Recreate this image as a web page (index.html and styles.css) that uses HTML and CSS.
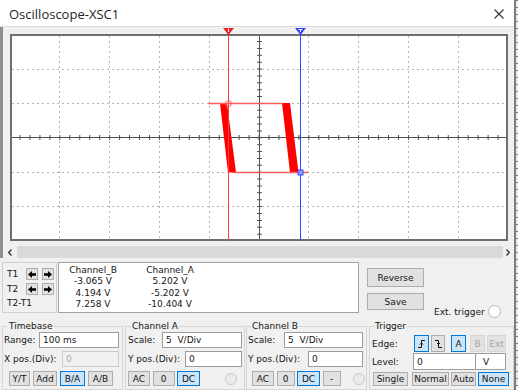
FILE: index.html
```html
<!DOCTYPE html>
<html lang="en">
<head>
    <meta charset="UTF-8">
    <meta name="viewport" content="width=device-width, initial-scale=1.0">
    <title>Oscilloscope-XSC1</title>
    <link rel="stylesheet" href="styles.css">
</head>
<body>
    <div class="window">
        <div class="titlebar">
            <span class="title">Oscilloscope-XSC1</span>
            <svg class="close" width="10" height="10" viewBox="0 0 10 10">
                <path d="M0.5 0.5 L9.5 9.5 M9.5 0.5 L0.5 9.5" stroke="#333" stroke-width="1.1" fill="none"/>
            </svg>
        </div>

        <div class="screen">
            <!-- scope canvas, drawn in page coordinates -->
            <svg class="scope" width="511" height="214" viewBox="3 27 511 214">
                <rect x="11" y="35" width="496" height="205" fill="#fff" stroke="#6e6e6e" stroke-width="2"/>
                <g stroke="#b5b5b5" stroke-width="1" stroke-dasharray="2 3" fill="none">
                    <path d="M59.5 36V239 M109.5 36V239 M159.5 36V239 M209.5 36V239 M308.5 36V239 M358.5 36V239 M408.5 36V239 M458.5 36V239"/>
                    <path d="M12 69.5H506 M12 103.5H506 M12 172.5H506 M12 206.5H506"/>
                </g>
                <g stroke="#505050" fill="none">
                    <path d="M12 137.5H506 M259.5 36V239"/>
                    <line x1="19.5" y1="137.5" x2="500" y2="137.5" stroke-width="5" stroke-dasharray="1 8.96"/>
                    <line x1="259.5" y1="41" x2="259.5" y2="236" stroke-width="5" stroke-dasharray="1 5.88"/>
                </g>
                <g fill="#ff0000">
                    <polygon points="220,103 227,103 236,172.5 228,172.5"/>
                    <polygon points="282,103 290,103 298.5,172.5 290,172.5"/>
                </g>
                <path d="M208 103.5H283 M234 172.5H308" stroke="#ff5b5b" stroke-width="1.4" fill="none"/>
                <line x1="228.5" y1="34" x2="228.5" y2="241" stroke="#ff3b3b"/>
                <line x1="300.5" y1="34" x2="300.5" y2="241" stroke="#3346ff"/>
                <polygon points="223,28 234,28 228.5,35" fill="#e82222"/>
                <line x1="228.5" y1="28.5" x2="228.5" y2="32" stroke="#fff"/>
                <polygon points="295,28 306,28 300.5,35" fill="#2f44f0"/>
                <path d="M298.5 29.5H302.5 M300.5 29.5V32" stroke="#fff" fill="none"/>
                <circle cx="228.5" cy="103.5" r="3" fill="none" stroke="#ff6060"/>
                <rect x="298" y="170" width="5" height="5" fill="#8fa0ff" stroke="#3346ff"/>
            </svg>
            <div class="hscroll">
                <span class="sb-btn sb-left">
                    <svg width="4" height="7" viewBox="0 0 4 7"><path d="M3.5 0.5 L0.7 3.5 L3.5 6.5" stroke="#333" stroke-width="1.3" fill="none"/></svg>
                </span>
                <span class="sb-track"></span>
                <span class="sb-btn sb-right">
                    <svg width="4" height="7" viewBox="0 0 4 7"><path d="M0.5 0.5 L3.3 3.5 L0.5 6.5" stroke="#333" stroke-width="1.3" fill="none"/></svg>
                </span>
            </div>
        </div>

        <div class="readout">
            <div class="tbox">
                <div class="trow">
                    <span class="tl">T1</span>
                    <span class="arrow"><svg width="8" height="7" viewBox="0 0 8 7"><polygon points="0,3.5 4,0 4,2.3 8,2.3 8,4.7 4,4.7 4,7" fill="#000"/></svg></span>
                    <span class="arrow"><svg width="8" height="7" viewBox="0 0 8 7"><polygon points="8,3.5 4,0 4,2.3 0,2.3 0,4.7 4,4.7 4,7" fill="#000"/></svg></span>
                </div>
                <div class="trow">
                    <span class="tl">T2</span>
                    <span class="arrow"><svg width="8" height="7" viewBox="0 0 8 7"><polygon points="0,3.5 4,0 4,2.3 8,2.3 8,4.7 4,4.7 4,7" fill="#000"/></svg></span>
                    <span class="arrow"><svg width="8" height="7" viewBox="0 0 8 7"><polygon points="8,3.5 4,0 4,2.3 0,2.3 0,4.7 4,4.7 4,7" fill="#000"/></svg></span>
                </div>
                <div class="tdiff">T2-T1</div>
            </div>
            <div class="data">
                <span>Channel_B</span><span>Channel_A</span>
                <span>-3.065 V</span><span>5.202 V</span>
                <span>4.194 V</span><span>-5.202 V</span>
                <span>7.258 V</span><span>-10.404 V</span>
            </div>
            <div class="side">
                <div class="side-btns">
                    <span class="btn reverse">Reverse</span>
                    <span class="btn save">Save</span>
                </div>
                <div class="ext">Ext. trigger <span class="radio radio-white"></span></div>
            </div>
        </div>

        <div class="groups">
            <fieldset class="grp timebase">
                <legend>Timebase</legend>
                <div class="row"><span>Range:</span><span class="field f-long">100 ms</span></div>
                <div class="row"><span>X pos.(Div):</span><span class="field f-short off">0</span></div>
                <div class="row btns">
                    <span class="btn w21">Y/T</span>
                    <span class="btn w24">Add</span>
                    <span class="btn w25 on">B/A</span>
                    <span class="btn w25">A/B</span>
                </div>
            </fieldset>

            <fieldset class="grp chan-a">
                <legend>Channel A</legend>
                <div class="row"><span>Scale:</span><span class="field f-long">5&nbsp;&nbsp;V/Div</span></div>
                <div class="row"><span>Y pos.(Div):</span><span class="field f-short">0</span></div>
                <div class="row btns">
                    <span class="btn w22">AC</span>
                    <span class="btn w22">0</span>
                    <span class="btn w23 on">DC</span>
                    <span class="radio"></span>
                </div>
            </fieldset>

            <fieldset class="grp chan-b">
                <legend>Channel B</legend>
                <div class="row"><span>Scale:</span><span class="field f-long">5&nbsp;&nbsp;V/Div</span></div>
                <div class="row"><span>Y pos.(Div):</span><span class="field f-short">0</span></div>
                <div class="row btns">
                    <span class="btn w22">AC</span>
                    <span class="btn w18">0</span>
                    <span class="btn w23 on">DC</span>
                    <span class="btn w18">-</span>
                    <span class="radio"></span>
                </div>
            </fieldset>

            <fieldset class="grp trigger">
                <legend>Trigger</legend>
                <div class="row">
                    <span class="tlabel">Edge:</span>
                    <span class="btn w15 on">
                        <svg width="11" height="12" viewBox="0 0 11 12"><path d="M2 9.5H5.5V2.5H9 M4 6.5L5.5 5L7 6.5" stroke="#111" stroke-width="1" fill="none"/></svg>
                    </span>
                    <span class="btn w14 ml2">
                        <svg width="11" height="12" viewBox="0 0 11 12"><path d="M2 2.5H5.5V9.5H9 M4 5L5.5 6.5L7 5" stroke="#111" stroke-width="1" fill="none"/></svg>
                    </span>
                    <span class="btn w15 ml6 on">A</span>
                    <span class="btn w15 ml4 dis">B</span>
                    <span class="btn w19 ml2 dis">Ext</span>
                </div>
                <div class="row">
                    <span class="tlabel lvl">Level:</span>
                    <span class="field f-level">0</span>
                    <span class="field unit">V</span>
                </div>
                <div class="row btns">
                    <span class="btn w35">Single</span>
                    <span class="btn w37 ml4">Normal</span>
                    <span class="btn w25 ml2">Auto</span>
                    <span class="btn w31 ml2 on">None</span>
                </div>
            </fieldset>
        </div>
    </div>
    <div class="edge"></div>
</body>
</html>
```

FILE: styles.css
```css
* {
    margin: 0;
    padding: 0;
    box-sizing: border-box;
}

body {
    width: 518px;
    height: 390px;
    overflow: hidden;
    display: flex;
    background: #ececec;
    font-family: "DejaVu Sans", Verdana, sans-serif;
    font-size: 9px;
    color: #151515;
}

.window {
    width: 514px;
    height: 390px;
    flex: none;
    display: flex;
    flex-direction: column;
    background: #f0f0f0;
}

/* title bar */
.titlebar {
    flex: none;
    height: 27px;
    display: flex;
    align-items: center;
    justify-content: space-between;
    padding: 2px 10px 0 9px;
    background: #fff;
    border-bottom: 1px solid #dcdcdc;
    font-family: "Open Sans", "Noto Sans", sans-serif;
    font-size: 13px;
    color: #1e1e1e;
}

.close {
    display: block;
}

/* scope screen */
.screen {
    flex: none;
    height: 231px;
    border-left: 3px solid #8f8f8f;
}

.scope {
    display: block;
}

.hscroll {
    display: flex;
    height: 12px;
    margin: 5px 1px 0 0;
}

.sb-btn {
    display: flex;
    align-items: center;
    justify-content: center;
    background: #f0f0f0;
}

.sb-left {
    width: 14px;
}

.sb-right {
    width: 10px;
}

.sb-track {
    flex: 1;
    background: #dadada;
}

/* cursor readout */
.readout {
    flex: none;
    display: flex;
    height: 51px;
    margin-top: 4px;
}

.tbox {
    width: 55px;
    margin-left: 2px;
    padding: 5px 0 0 4px;
    border: 1px solid #d0d0d0;
}

.trow {
    display: flex;
    align-items: center;
    height: 12px;
}

.trow + .trow {
    margin-top: 3px;
}

.tl {
    width: 19px;
}

.arrow {
    width: 12px;
    height: 12px;
    display: flex;
    align-items: center;
    justify-content: center;
    background: #e1e1e1;
    border: 1px solid #adadad;
}

.arrow + .arrow {
    margin-left: 4px;
}

.tdiff {
    margin-top: 3px;
    line-height: 11px;
}

.data {
    width: 301px;
    margin-left: 1px;
    padding: 2px 0 0 4px;
    display: grid;
    grid-template-columns: 60px 60px;
    column-gap: 17px;
    align-content: start;
    line-height: 11.3px;
    text-align: center;
    white-space: nowrap;
    background: #fff;
    border: 1px solid #a3a3a3;
}

.side {
    display: flex;
    margin-left: 8px;
}

.side-btns {
    display: flex;
    flex-direction: column;
}

.ext {
    display: flex;
    align-items: center;
    gap: 3px;
    height: 13px;
    margin: 43px 0 0 10px;
    white-space: nowrap;
}

/* common controls */
.btn {
    flex: none;
    display: flex;
    align-items: center;
    justify-content: center;
    height: 100%;
    background: #e1e1e1;
    border: 1px solid #adadad;
    white-space: nowrap;
}

.btn.on {
    background: #cce4f7;
    border-color: #0078d7;
}

.btn.dis {
    background: #e2e2e2;
    border-color: #d6d6d6;
    color: #a6a6a6;
}

.reverse {
    width: 57px;
    height: 19px;
    margin-top: 6px;
}

.save {
    width: 57px;
    height: 17px;
    margin-top: 6px;
}

.field {
    flex: none;
    display: flex;
    align-items: center;
    height: 100%;
    padding-left: 3px;
    background: #fff;
    border: 1px solid #9d9d9d;
    white-space: pre;
}

.field.off {
    background: #f0f0f0;
    border-color: #cccccc;
    color: #a8a8a8;
}

.radio {
    flex: none;
    width: 12px;
    height: 12px;
    border-radius: 50%;
    background: #ebebeb;
    border: 1px solid #c8c8c8;
}

.radio-white {
    width: 13px;
    height: 13px;
    background: #fff;
    border-color: #b7b7b7;
}

.f-long { width: 80px; }
.f-short { width: 57px; }
.f-level { width: 63px; }

.unit {
    width: 30px;
    padding-left: 7px;
    border-left: 0;
}

.w14 { width: 14px; }
.w15 { width: 15px; }
.w18 { width: 18px; }
.w19 { width: 19px; }
.w21 { width: 21px; }
.w22 { width: 22px; }
.w23 { width: 23px; }
.w24 { width: 24px; }
.w25 { width: 25px; }
.w31 { width: 31px; }
.w35 { width: 35px; }
.w37 { width: 37px; }

.ml2 { margin-left: 2px; }
.ml4 { margin-left: 4px; }
.ml6 { margin-left: 6px; }

/* control groups */
.groups {
    flex: 1;
    display: flex;
    margin-top: 7px;
}

.grp {
    min-width: 0;
    border: 1px solid #d6d6d6;
}

.grp legend {
    line-height: 12px;
    padding: 0 1px;
}

.row {
    display: flex;
    align-items: center;
    justify-content: space-between;
    height: 16px;
    white-space: nowrap;
}

.row + .row {
    margin-top: 3px;
}

.row.btns {
    justify-content: flex-start;
    height: 15px;
    margin-top: 4px;
}

.timebase {
    width: 121px;
    margin-left: 2px;
    padding: 0 3px 0 1px;
}

.timebase legend {
    margin-left: 4px;
}

.timebase .btns {
    gap: 3px;
    padding-left: 5px;
}

.chan-a {
    width: 120px;
    margin-left: 2px;
    padding: 0 2px;
}

.chan-a legend {
    margin-left: 3px;
}

.chan-a .btns {
    gap: 2.5px;
}

.chan-a .radio {
    margin-left: 22.5px;
}

.chan-b {
    width: 121px;
    margin-left: 1px;
    padding: 0 3px 0 1px;
}

.chan-b legend {
    margin-left: 3px;
}

.chan-b .f-long { width: 79px; }
.chan-b .f-short { width: 55px; }

.chan-b .btns {
    gap: 2.5px;
    padding-left: 4px;
}

.chan-b .radio {
    margin-left: 9.5px;
}

.trigger {
    width: 145px;
    margin-left: 2px;
    padding: 0 7px 0 2px;
}

.trigger legend {
    margin-left: 2px;
}

.trigger .row {
    justify-content: flex-start;
    height: 17px;
    margin-top: 1px;
}

.trigger .row:first-of-type {
    margin-top: 3px;
}

.trigger .row.btns {
    height: 14px;
    margin-top: 2px;
    padding-left: 1px;
}

.tlabel {
    width: 42px;
}

.tlabel.lvl {
    width: 41px;
}

/* strip of the window behind, on the right */
.edge {
    width: 4px;
    height: 390px;
    flex: none;
    background:
        linear-gradient(#7d7d7d, #7d7d7d) 0 0 / 2px 100% no-repeat,
        repeating-linear-gradient(to bottom, #7d7d7d 0 1px, transparent 1px 7px) 2px 0 / 2px 100% no-repeat,
        #ececec;
}
```
